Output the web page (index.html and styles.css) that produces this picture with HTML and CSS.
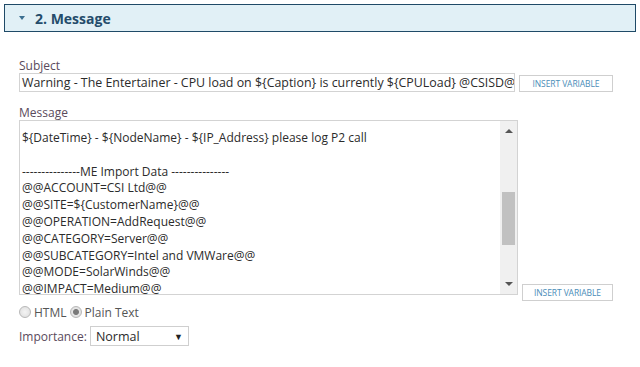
FILE: index.html
```html
<!DOCTYPE html>
<html lang="en">
<head>
    <meta charset="UTF-8">
    <title>Alert - Message</title>
    <link rel="stylesheet" href="styles.css">
</head>
<body>

<div class="section-header">
    <span class="caret"></span>
    <span class="section-title">2. Message</span>
</div>

<div class="section-body">
    <div class="field">
        <div class="field-label">Subject</div>
        <div class="field-row">
            <div class="text-input">Warning - The Entertainer - CPU load on ${Caption} is currently ${CPULoad} @CSISD@</div>
            <button class="insert-btn">Insert Variable</button>
        </div>
    </div>

    <div class="field">
        <div class="field-label">Message</div>
        <div class="field-row bottom">
            <div class="text-area">
                <div class="text-area-content">
                    <div class="line">${DateTime} - ${NodeName} - ${IP_Address} please log P2 call</div>
                    <div class="line">&nbsp;</div>
                    <div class="line">---------------ME Import Data ---------------</div>
                    <div class="line">@@ACCOUNT=CSI Ltd@@</div>
                    <div class="line">@@SITE=${CustomerName}@@</div>
                    <div class="line">@@OPERATION=AddRequest@@</div>
                    <div class="line">@@CATEGORY=Server@@</div>
                    <div class="line">@@SUBCATEGORY=Intel and VMWare@@</div>
                    <div class="line">@@MODE=SolarWinds@@</div>
                    <div class="line">@@IMPACT=Medium@@</div>
                </div>
                <div class="scrollbar">
                    <span class="arrow up"></span>
                    <div class="track"><div class="thumb"></div></div>
                    <span class="arrow down"></span>
                </div>
            </div>
            <button class="insert-btn small">Insert Variable</button>
        </div>
    </div>

    <div class="format-row">
        <label class="radio"><span class="radio-dot"></span>HTML</label>
        <label class="radio"><span class="radio-dot checked"></span>Plain Text</label>
    </div>

    <div class="importance-row">
        <span class="field-label">Importance:</span>
        <div class="select-box">
            <span>Normal</span>
            <span class="select-arrow">&#9660;</span>
        </div>
    </div>
</div>

</body>
</html>
```

FILE: styles.css
```css
body {
    font-family: 'Open Sans', sans-serif;
    margin: 0;
    padding: 4px 4px 0 4px;
    background: #fff;
    color: #333;
    font-size: 12px;
}

.section-header {
    width: 630px;
    height: 26px;
    display: flex;
    align-items: center;
    background: #e1f0f6;
    border: 1px solid #1f4a67;
}

.caret {
    width: 0;
    height: 0;
    margin-left: 14px;
    margin-right: 10px;
    border-left: 3px solid transparent;
    border-right: 3px solid transparent;
    border-top: 4px solid #3b6f90;
}

.section-title {
    font-size: 14px;
    font-weight: bold;
    color: #244c6b;
}

.section-body {
    padding: 26px 0 0 15px;
}

.field {
    margin-bottom: 13px;
}

.field-label {
    color: #5a4b5c;
    font-size: 12px;
    line-height: 15px;
}

.field-row {
    display: flex;
    align-items: center;
    gap: 4px;
}

.field-row.bottom {
    align-items: flex-end;
}

.text-input {
    width: 490px;
    height: 17px;
    line-height: 17px;
    padding: 0 2px;
    border: 1px solid #d3d3d3;
    white-space: nowrap;
    overflow: hidden;
    font-size: 12.4px;
    color: #2b2b2b;
}

.insert-btn {
    width: 94px;
    height: 17px;
    margin-top: 2px;
    padding: 0;
    background: #fff;
    border: 1px solid #cfcfcf;
    font-family: 'Open Sans', sans-serif;
    font-size: 8.5px;
    text-transform: uppercase;
    color: #4a8db8;
    letter-spacing: -0.1px;
}

.insert-btn.small {
    width: 91px;
    margin-bottom: -6px;
}

.text-area {
    width: 497px;
    height: 173px;
    display: flex;
    border: 1px solid #d3d3d3;
    overflow: hidden;
}

.text-area-content {
    flex: 1;
    padding: 9px 3px 0 2px;
    font-size: 12px;
    color: #2b2b2b;
}

.line {
    height: 16.8px;
    line-height: 16.8px;
    white-space: nowrap;
}

.scrollbar {
    width: 17px;
    display: flex;
    flex-direction: column;
    align-items: center;
    background: #f0f0f0;
}

.arrow {
    width: 0;
    height: 0;
    border-left: 4px solid transparent;
    border-right: 4px solid transparent;
}

.arrow.up {
    margin-top: 8px;
    border-bottom: 4px solid #555;
}

.arrow.down {
    margin-bottom: 8px;
    border-top: 4px solid #555;
}

.track {
    flex: 1;
    width: 100%;
    padding-top: 59px;
}

.thumb {
    width: 13px;
    height: 53px;
    margin-left: 2px;
    background: #c1c1c1;
}

.format-row {
    display: flex;
    align-items: center;
    margin-top: -3px;
    height: 14px;
}

.radio {
    display: flex;
    align-items: center;
    color: #555;
    margin-right: 3px;
}

.radio-dot {
    width: 10px;
    height: 10px;
    margin-right: 3px;
    border-radius: 50%;
    border: 1px solid #b8b8b8;
    background: radial-gradient(circle, #f4f4f4 0, #dcdcdc 100%);
    box-sizing: content-box;
}

.radio-dot.checked {
    background: radial-gradient(circle, #7a7a7a 0, #7a7a7a 2.5px, #e6e6e6 3.5px, #d6d6d6 100%);
}

.importance-row {
    display: flex;
    align-items: center;
    gap: 3px;
    margin-top: 7px;
}

.select-box {
    width: 87px;
    height: 18px;
    display: flex;
    align-items: center;
    justify-content: space-between;
    padding: 0 5px;
    border: 1px solid #cfcfcf;
    color: #2b2b2b;
    font-size: 12.5px;
}

.select-arrow {
    font-size: 9px;
    color: #222;
}
```
